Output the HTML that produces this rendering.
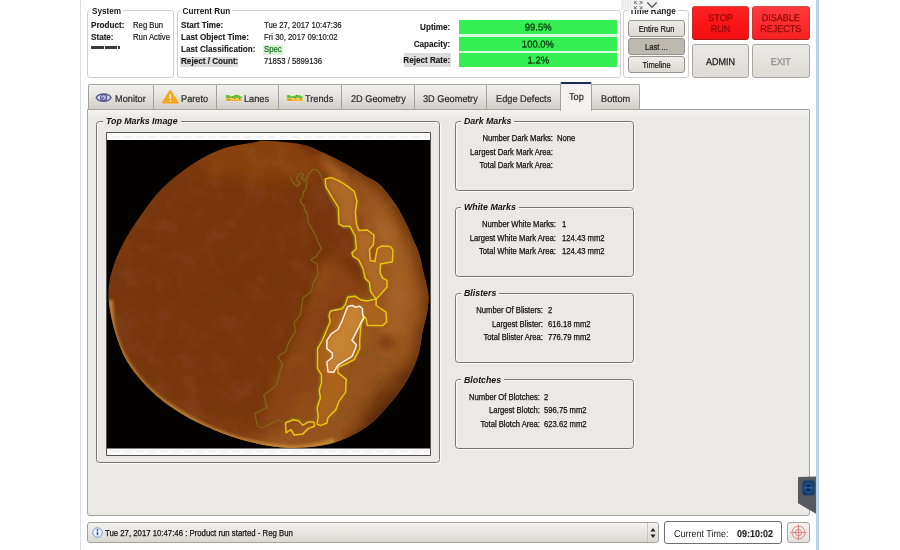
<!DOCTYPE html>
<html>
<head>
<meta charset="utf-8">
<title>Top Marks</title>
<style>
html,body{margin:0;padding:0;}
body{width:900px;height:550px;position:relative;overflow:hidden;background:#fff;font-family:"Liberation Sans",sans-serif;font-size:8px;color:#1a1a1a;}
.abs{position:absolute;}
.t{position:absolute;white-space:nowrap;line-height:10px;height:10px;font-size:7.85px;}
.b{font-weight:bold;font-size:8.15px;-webkit-text-stroke:0.12px #1a1a1a;}
.n{-webkit-text-stroke:0.2px currentColor;font-size:8.7px;transform:translateY(-0.8px) scaleX(0.89);transform-origin:0 50%;}
.box{position:absolute;border:1px solid #cfcfcf;border-radius:3px;background:#fff;box-sizing:border-box;}
.leg{position:absolute;background:#fff;font-weight:bold;font-size:8.2px;line-height:10px;padding:0 2px;white-space:nowrap;}
.tab{position:absolute;top:84px;height:26px;box-sizing:border-box;border:1px solid #a5a29c;border-bottom:none;border-radius:2px 2px 0 0;background:linear-gradient(#f1f0ee,#e4e2de 50%,#cecbc5);font-size:9.8px;line-height:27px;white-space:nowrap;color:#2a2a2a;}
.tab span{-webkit-text-stroke:0.2px #2a2a2a;position:absolute;top:0;transform:matrix(0.94,0.0005,0,1,0,0);transform-origin:0 50%;}
.fs{position:absolute;border:1px solid #787673;border-radius:3.500px;box-sizing:border-box;box-shadow:inset 1px 1px 0 #fbfbfa,1px 1px 0 #fbfbfa;}
.fl{position:absolute;background:#ebe9e6;font-weight:bold;font-style:italic;font-size:8.8px;line-height:10px;padding:0 3px;white-space:nowrap;color:#111;}
.k{position:absolute;white-space:nowrap;line-height:10px;font-size:8.5px;text-align:right;width:120px;color:#111;transform:scaleX(0.9);transform-origin:100% 50%;-webkit-text-stroke:0.25px #111;}
.v{position:absolute;white-space:nowrap;line-height:10px;font-size:8.5px;color:#111;transform:scaleX(0.9);transform-origin:0 50%;-webkit-text-stroke:0.25px #111;}
.btn{position:absolute;box-sizing:border-box;border:1px solid #a9a6a0;border-radius:3px;background:linear-gradient(#f4f3f0,#e4e2dd);text-align:center;white-space:nowrap;}
.sm{font-size:8.3px;line-height:16px;color:#151515;background:linear-gradient(#efede9,#dcd9d3);border-color:#96938d;}
.sm span{-webkit-text-stroke:0.2px #151515;display:inline-block;transform:scaleX(0.91);}
.big{font-size:9.8px;line-height:11px;}
.big span{-webkit-text-stroke:0.25px currentColor;position:absolute;left:0;width:100%;text-align:center;transform:matrix(0.92,0.0005,0,1,0,0);}
.bar{position:absolute;left:459px;width:158px;height:14px;background:#35ef52;text-align:center;font-size:10px;line-height:14px;color:#0e3a12;}
.bar span{-webkit-text-stroke:0.3px #0e3a12;display:inline-block;transform:translateY(0.6px) matrix(0.95,0.0005,0,1,0,0);}
</style>
</head>
<body><div id="root" style="position:absolute;left:0;top:0;width:900px;height:550px;will-change:transform;">
<!-- window left edge + right stripe -->
<div class="abs" style="left:80px;top:0;width:1px;height:550px;background:#dcdfe3;"></div>
<div class="abs" style="left:816px;top:0;width:3px;height:550px;background:#bcd3ea;"></div>

<!-- System box -->
<div class="box" style="left:87px;top:10px;width:87px;height:67.500px;"></div>
<div class="leg" style="left:90px;top:6.500px;">System</div>
<div class="t b" style="left:91px;top:20.700px;">Product:</div>
<div class="t n" style="left:132.500px;top:20.700px;">Reg Bun</div>
<div class="t b" style="left:91px;top:32.800px;">State:</div>
<div class="t n" style="left:132.500px;top:32.800px;">Run Active</div>
<div class="abs" style="left:91px;top:46px;width:13px;height:3px;background:#3a3a3a;"></div>
<div class="abs" style="left:105px;top:46px;width:12px;height:3px;background:#3a3a3a;"></div>
<div class="abs" style="left:118px;top:46px;width:2px;height:3px;background:#3a3a3a;"></div>

<!-- Current Run box -->
<div class="box" style="left:177px;top:10px;width:444px;height:67.500px;"></div>
<div class="leg" style="left:180.500px;top:6.500px;">Current Run</div>
<div class="t b" style="left:181px;top:20.700px;">Start Time:</div>
<div class="t b" style="left:181px;top:32.800px;">Last Object Time:</div>
<div class="t b" style="left:181px;top:44.900px;">Last Classification:</div>
<div class="abs" style="left:180px;top:57px;width:58px;height:10px;background:#dddddd;"></div>
<div class="t b" style="left:181px;top:57.400px;">Reject / Count:</div>
<div class="t n" style="left:264px;top:20.700px;">Tue 27, 2017 10:47:36</div>
<div class="t n" style="left:264px;top:32.800px;">Fri 30, 2017 09:10:02</div>
<div class="abs" style="left:263px;top:45px;width:19.500px;height:10px;background:#d9f2d5;"></div>
<div class="t n" style="left:264px;top:44.900px;color:#1d6b1d;">Spec</div>
<div class="t n" style="left:264px;top:57.400px;">71853 / 5899136</div>

<div class="t b" style="left:350px;top:23.200px;width:100.300px;text-align:right;">Uptime:</div>
<div class="t b" style="left:350px;top:39.700px;width:100.300px;text-align:right;">Capacity:</div>
<div class="abs" style="left:404px;top:53px;width:47px;height:14px;background:#dddddd;"></div>
<div class="t b" style="left:350px;top:56.200px;width:100.300px;text-align:right;">Reject Rate:</div>
<div class="abs" style="left:459px;top:21px;width:158px;height:45px;background:#d6f9dd;"></div>
<div class="bar" style="top:20px;"><span>99.5%</span></div>
<div class="bar" style="top:36.500px;"><span>100.0%</span></div>
<div class="bar" style="top:53px;"><span>1.2%</span></div>

<!-- Time range box -->
<div class="box" style="left:623px;top:10px;width:66px;height:67.500px;"></div>
<div class="leg" style="left:627.500px;top:6.500px;">Time Range</div>
<div class="btn sm" style="left:628px;top:20px;width:57px;height:17px;"><span>Entire Run</span></div>
<div class="btn sm" style="left:628px;top:38px;width:57px;height:17px;background:#bdb8b0;"><span>Last ...</span></div>
<div class="btn sm" style="left:628px;top:56px;width:57px;height:17px;"><span>Timeline</span></div>
<!-- overlay toolbar -->
<div class="abs" style="left:621px;top:0;width:38px;height:10px;background:#f1f1f1;"></div>
<svg class="abs" style="left:621px;top:0;" width="38" height="11" viewBox="0 0 38 11">
<rect x="1" y="0" width="8.500" height="9.500" fill="#e3e3e3"/>
<g stroke="#fafafa" stroke-width="0.800" fill="none"><path d="M3.300 0V9.500M5.800 0V9.500M8.300 0V9.500M1 1.800H9.500M1 4.300H9.500M1 6.800H9.500M1 9.200H9.500"/></g>
<g stroke="#777" stroke-width="1" fill="none"><path d="M15.700 1.800h-2.200v2.200M13.500 1.800l2.600 2.600M18.700 1.800h2.200v2.200M20.900 1.800l-2.600 2.600M15.700 8.600h-2.200v-2.200M13.500 8.600l2.600-2.600M18.700 8.600h2.200v-2.200M20.900 8.600l-2.600-2.600"/></g>
<path d="M26.300 2.400l4.700 4.800l4.700-4.800" stroke="#5c5c5c" stroke-width="1.400" fill="none"/>
</svg>

<!-- big buttons -->
<div class="btn big" style="left:692px;top:6px;width:57px;height:34px;background:linear-gradient(#fd2224,#fb1416 55%,#f21012);border-color:#d84040 #c62a2a #a81818 #c62a2a;color:#8e0b0b;"><span style="top:5px;">STOP</span><span style="top:16.100px;">RUN</span></div>
<div class="btn big" style="left:752px;top:6px;width:57.500px;height:34px;background:linear-gradient(#fe3a3c,#fc2c2e 55%,#f52224);border-color:#de4a4a #cc3434 #b02020 #cc3434;color:#8e0b0b;"><span style="top:5px;">DISABLE</span><span style="top:16.100px;">REJECTS</span></div>
<div class="btn big" style="left:692px;top:44px;width:57px;height:34px;background:linear-gradient(#ebe9e5,#dedbd6);color:#1a1a1a;"><span style="top:10.500px;">ADMIN</span></div>
<div class="btn big" style="left:752px;top:44px;width:57.500px;height:34px;background:linear-gradient(#ebe9e5,#dedbd6);color:#8b8b8b;"><span style="top:10.500px;">EXIT</span></div>

<!-- tabs -->
<div class="tab" style="left:88px;width:66px;"><span style="left:26px;">Monitor</span></div>
<div class="tab" style="left:153px;width:64px;"><span style="left:27.200px;">Pareto</span></div>
<div class="tab" style="left:216px;width:63px;"><span style="left:27.300px;">Lanes</span></div>
<div class="tab" style="left:278px;width:64px;"><span style="left:26.200px;">Trends</span></div>
<div class="tab" style="left:341px;width:74px;"><span style="left:8.500px;">2D Geometry</span></div>
<div class="tab" style="left:414px;width:73px;"><span style="left:7.700px;">3D Geometry</span></div>
<div class="tab" style="left:486px;width:75px;"><span style="left:8.500px;">Edge Defects</span></div>
<div class="tab" style="left:591px;width:48.500px;"><span style="left:9px;">Bottom</span></div>

<!-- tab icons -->
<svg class="abs" style="left:95px;top:92px;" width="18" height="12" viewBox="0 0 18 12">
<path d="M1.300 5.600C3.800 0.700 13.400 0.700 15.900 5.600C13.400 10.500 3.800 10.500 1.300 5.600Z" fill="#ececf6" stroke="#5d5d96" stroke-width="1.600"/>
<circle cx="8.600" cy="5.600" r="3.100" fill="#b9b9e8" stroke="#585892" stroke-width="1.300"/>
<circle cx="8" cy="6.100" r="1.100" fill="#6a6aa6"/>
</svg>
<svg class="abs" style="left:161px;top:89px;" width="19" height="16" viewBox="0 0 19 16">
<path d="M9.300 1.600L17 13.600H1.600Z" fill="#f8a61e" stroke="#f8a61e" stroke-width="1.600" stroke-linejoin="round"/>
<path d="M9.300 5V10" stroke="#fff3c4" stroke-width="1.600"/><circle cx="9.300" cy="12" r="0.900" fill="#fff3c4"/>
</svg>
<svg class="abs" style="left:224.500px;top:93px;" width="18" height="10" viewBox="0 0 18 10">
<defs><filter id="ib224" x="-20%" y="-20%" width="140%" height="140%"><feGaussianBlur stdDeviation="0.450"/></filter></defs>
<g filter="url(#ib224)">
<rect x="0.800" y="1.600" width="16" height="6.400" rx="1" fill="#eef7c8"/>
<path d="M0.800 2.200L3.800 2L5.600 3.600L7.400 3.200L9.400 2.600L10.600 1.400L12 2.800L13.400 1.800L15.200 3.200L16.800 3.600V5.200H0.800Z" fill="#56c24c"/>
<path d="M0.800 4.600L4 5.200L6.500 4.400L8.400 5L10.400 4.200L12.200 5L14.200 4.400L16.800 5.400V7.400H0.800Z" fill="#f7d848"/>
<path d="M0.800 6.600H16.800V8H0.800Z" fill="#f3b040"/>
<circle cx="7.200" cy="4.200" r="0.800" fill="#7f6a1c"/><circle cx="9.800" cy="5.200" r="0.800" fill="#8a6a1a"/><circle cx="11.200" cy="2.600" r="0.700" fill="#4a7a2a"/><circle cx="14.600" cy="5.600" r="0.800" fill="#8a6a1a"/>
<path d="M1.500 6L5.500 6.600" stroke="#8a7a20" stroke-width="0.800"/>
</g>
</svg>
<svg class="abs" style="left:286px;top:93px;" width="18" height="10" viewBox="0 0 18 10">
<defs><filter id="ib286" x="-20%" y="-20%" width="140%" height="140%"><feGaussianBlur stdDeviation="0.450"/></filter></defs>
<g filter="url(#ib286)">
<rect x="0.800" y="1.600" width="16" height="6.400" rx="1" fill="#eef7c8"/>
<path d="M0.800 2.200L3.800 2L5.600 3.600L7.400 3.200L9.400 2.600L10.600 1.400L12 2.800L13.400 1.800L15.200 3.200L16.800 3.600V5.200H0.800Z" fill="#56c24c"/>
<path d="M0.800 4.600L4 5.200L6.500 4.400L8.400 5L10.400 4.200L12.200 5L14.200 4.400L16.800 5.400V7.400H0.800Z" fill="#f7d848"/>
<path d="M0.800 6.600H16.800V8H0.800Z" fill="#f3b040"/>
<circle cx="7.200" cy="4.200" r="0.800" fill="#7f6a1c"/><circle cx="9.800" cy="5.200" r="0.800" fill="#8a6a1a"/><circle cx="11.200" cy="2.600" r="0.700" fill="#4a7a2a"/><circle cx="14.600" cy="5.600" r="0.800" fill="#8a6a1a"/>
<path d="M1.500 6L5.500 6.600" stroke="#8a7a20" stroke-width="0.800"/>
</g>
</svg>
<!-- content panel -->
<div class="abs" style="left:87px;top:109px;width:723px;height:407px;box-sizing:border-box;border:1px solid #a5a29c;border-radius:0 0 3px 3px;background:linear-gradient(#f4f3f1,#ebe9e6 9px,#ebe9e6);"></div>
<div class="tab" style="left:560px;top:82px;width:32px;height:29px;background:#f3f2f0;border-top:2px solid #1b2a5a;line-height:26px;"><span style="left:8px;">Top</span></div>

<!-- Top marks fieldset -->
<div class="fs" style="left:96px;top:121px;width:344px;height:342px;"></div>
<div class="fl" style="left:103px;top:116.2px;">Top Marks Image</div>

<svg class="abs" style="left:106px;top:132px;" width="325" height="324" viewBox="106 132 325 324">
<defs>
<clipPath id="bc"><path d="M265.0 140.8C272.9 141.1 292.0 142.4 301.8 144.4C311.6 146.4 316.4 149.8 323.7 153.1C331.0 156.4 338.2 160.0 345.5 164.0C352.8 168.0 361.7 173.8 367.3 177.1C372.9 180.4 375.2 180.7 379.0 184.0C382.8 187.3 386.7 192.5 390.0 196.8C393.3 201.1 396.0 204.8 399.0 209.9C402.0 215.0 405.8 222.6 408.0 227.3C410.2 232.0 410.7 233.9 412.5 238.3C414.3 242.7 417.2 247.8 419.0 253.5C420.8 259.2 421.9 265.9 423.5 272.8C425.1 279.7 427.7 288.1 428.3 294.6C428.9 301.2 428.0 305.9 427.0 312.1C426.0 318.3 424.1 324.1 422.5 331.7C420.9 339.3 420.5 348.7 417.5 357.5C414.5 366.3 409.6 376.2 404.5 384.5C399.4 392.8 392.9 400.2 387.0 407.0C381.1 413.8 375.8 419.8 369.0 425.0C362.2 430.2 354.0 434.7 346.5 438.0C339.0 441.3 331.4 443.4 324.0 445.0C316.6 446.6 309.1 447.2 301.8 447.6C294.5 448.0 287.9 448.1 280.0 447.3C272.1 446.5 264.0 445.3 254.6 443.0C245.2 440.7 234.9 438.1 223.6 433.7C212.3 429.3 197.9 423.1 186.6 416.7C175.3 410.3 164.9 403.3 155.6 395.1C146.3 386.9 137.1 376.1 130.9 367.3C124.7 358.6 121.8 351.4 118.5 342.6C115.2 333.8 112.5 323.5 110.8 314.7C109.1 305.9 108.1 298.1 108.6 290.0C109.0 281.9 110.9 274.1 113.5 266.0C116.1 257.9 119.9 249.5 124.3 241.3C128.7 233.1 133.8 225.4 140.0 216.6C146.2 207.8 153.0 197.5 161.8 188.7C170.6 179.9 182.4 170.7 192.7 164.0C203.0 157.3 213.3 152.1 223.6 148.5C233.9 144.9 247.7 143.7 254.6 142.4C261.5 141.1 257.1 140.5 265.0 140.8Z"/></clipPath>
<filter id="bl8" x="-30%" y="-30%" width="160%" height="160%"><feGaussianBlur stdDeviation="8"/></filter>
<filter id="bl4" x="-30%" y="-30%" width="160%" height="160%"><feGaussianBlur stdDeviation="4"/></filter>
<filter id="bl2" x="-30%" y="-30%" width="160%" height="160%"><feGaussianBlur stdDeviation="2"/></filter>
<filter id="bl1b" x="-10%" y="-10%" width="120%" height="120%"><feGaussianBlur stdDeviation="1.4"/></filter>
<filter id="bl1" x="-10%" y="-10%" width="120%" height="120%"><feGaussianBlur stdDeviation="0.6"/></filter>
<radialGradient id="bg" cx="0.42" cy="0.45" r="0.62"><stop offset="0" stop-color="#74330d"/><stop offset="0.7" stop-color="#783710"/><stop offset="1" stop-color="#8a4414"/></radialGradient>
<filter id="tex" x="0" y="0" width="100%" height="100%"><feTurbulence type="fractalNoise" baseFrequency="0.045" numOctaves="3" seed="7" result="n"/><feColorMatrix in="n" type="matrix" values="0 0 0 0 0.75  0 0 0 0 0.42  0 0 0 0 0.12  1.4 0 0 0 -0.6"/></filter>
</defs>
<rect x="107" y="133" width="323" height="322.500" fill="#fbfbfb"/>
<rect x="107" y="140" width="323" height="308.500" fill="#040201"/>
<path d="M112 137H428M112 451.500H428" stroke="#f0f0f0" stroke-width="2" stroke-dasharray="7 5" fill="none"/>
<g filter="url(#bl1)"><path d="M265.0 140.8C272.9 141.1 292.0 142.4 301.8 144.4C311.6 146.4 316.4 149.8 323.7 153.1C331.0 156.4 338.2 160.0 345.5 164.0C352.8 168.0 361.7 173.8 367.3 177.1C372.9 180.4 375.2 180.7 379.0 184.0C382.8 187.3 386.7 192.5 390.0 196.8C393.3 201.1 396.0 204.8 399.0 209.9C402.0 215.0 405.8 222.6 408.0 227.3C410.2 232.0 410.7 233.9 412.5 238.3C414.3 242.7 417.2 247.8 419.0 253.5C420.8 259.2 421.9 265.9 423.5 272.8C425.1 279.7 427.7 288.1 428.3 294.6C428.9 301.2 428.0 305.9 427.0 312.1C426.0 318.3 424.1 324.1 422.5 331.7C420.9 339.3 420.5 348.7 417.5 357.5C414.5 366.3 409.6 376.2 404.5 384.5C399.4 392.8 392.9 400.2 387.0 407.0C381.1 413.8 375.8 419.8 369.0 425.0C362.2 430.2 354.0 434.7 346.5 438.0C339.0 441.3 331.4 443.4 324.0 445.0C316.6 446.6 309.1 447.2 301.8 447.6C294.5 448.0 287.9 448.1 280.0 447.3C272.1 446.5 264.0 445.3 254.6 443.0C245.2 440.7 234.9 438.1 223.6 433.7C212.3 429.3 197.9 423.1 186.6 416.7C175.3 410.3 164.9 403.3 155.6 395.1C146.3 386.9 137.1 376.1 130.9 367.3C124.7 358.6 121.8 351.4 118.5 342.6C115.2 333.8 112.5 323.5 110.8 314.7C109.1 305.9 108.1 298.1 108.6 290.0C109.0 281.9 110.9 274.1 113.5 266.0C116.1 257.9 119.9 249.5 124.3 241.3C128.7 233.1 133.8 225.4 140.0 216.6C146.2 207.8 153.0 197.5 161.8 188.7C170.6 179.9 182.4 170.7 192.7 164.0C203.0 157.3 213.3 152.1 223.6 148.5C233.9 144.9 247.7 143.7 254.6 142.4C261.5 141.1 257.1 140.5 265.0 140.8Z" fill="url(#bg)"/>
<g clip-path="url(#bc)">
<ellipse cx="275" cy="150" rx="90" ry="30" fill="#95480f" opacity="0.55" filter="url(#bl8)"/>
<path d="M330.0 140.0C317.3 144.7 342.1 165.0 345.0 175.0C347.9 185.0 348.9 204.3 352.0 215.0C355.1 225.7 365.3 245.7 368.0 255.0C370.7 264.3 374.1 279.0 372.0 285.0C369.9 291.0 356.5 294.0 352.0 300.0C347.5 306.0 342.3 320.7 338.0 330.0C333.7 339.3 325.1 359.3 320.0 370.0C314.9 380.7 306.7 401.7 300.0 410.0C293.3 418.3 276.0 426.0 270.0 432.0C264.0 438.0 232.3 451.9 255.0 455.0C277.7 458.1 415.3 497.0 440.0 455.0C464.7 413.0 454.7 182.0 440.0 140.0C425.3 98.0 342.7 135.3 330.0 140.0Z" fill="#94521b" filter="url(#bl8)"/>
<path d="M372.0 200.0C374.8 198.3 389.5 219.7 395.0 230.0C400.5 240.3 402.5 250.3 405.0 262.0C407.5 273.7 410.8 287.8 410.0 300.0C409.2 312.2 403.0 326.7 400.0 335.0C397.0 343.3 395.3 350.8 392.0 350.0C388.7 349.2 380.3 338.3 380.0 330.0C379.7 321.7 388.7 310.0 390.0 300.0C391.3 290.0 390.0 280.0 388.0 270.0C386.0 260.0 380.7 251.7 378.0 240.0C375.3 228.3 369.2 201.7 372.0 200.0Z" fill="#aa692b" opacity="0.75" filter="url(#bl8)"/>
<path d="M316 150L326 168L338 186L352 196L345 176L330 152Z" fill="#b56d2c" opacity="0.8" filter="url(#bl4)"/>
<path d="M109.0 300.0C109.5 305.0 109.5 320.0 112.0 330.0C114.5 340.0 117.7 349.5 124.0 360.0C130.3 370.5 139.7 383.3 150.0 393.0C160.3 402.7 173.7 410.8 186.0 418.0C198.3 425.2 211.3 431.3 224.0 436.0C236.7 440.7 249.3 443.8 262.0 446.0C274.7 448.2 287.8 449.7 300.0 449.0C312.2 448.3 329.2 443.2 335.0 442.0" fill="none" stroke="#c48a38" stroke-width="8" opacity="0.85" filter="url(#bl1b)"/>
<path d="M345.0 300.0C340.0 303.7 334.2 304.5 330.0 312.0C325.8 319.5 322.3 332.8 320.0 345.0C317.7 357.2 316.8 372.5 316.0 385.0C315.2 397.5 321.0 413.3 315.0 420.0C309.0 426.7 288.8 425.0 280.0 425.0C271.2 425.0 262.8 426.7 262.0 420.0C261.2 413.3 269.5 399.2 275.0 385.0C280.5 370.8 288.8 350.5 295.0 335.0C301.2 319.5 307.8 304.2 312.0 292.0C316.2 279.8 315.3 267.0 320.0 262.0C324.7 257.0 333.3 257.3 340.0 262.0C346.7 266.7 359.2 283.7 360.0 290.0C360.8 296.3 350.0 296.3 345.0 300.0Z" fill="#8f4a16" opacity="0.7" filter="url(#bl4)"/>
<ellipse cx="408" cy="415" rx="55" ry="40" fill="#4e1f06" opacity="0.55" filter="url(#bl8)" transform="rotate(-48 408 415)"/>
<ellipse cx="386" cy="342" rx="9" ry="6" fill="#6a2e0c" opacity="0.7" filter="url(#bl4)"/>
<path d="M300.0 141.0C303.9 143.0 316.1 149.3 323.7 153.1C331.3 156.9 338.2 160.0 345.5 164.0C352.8 168.0 361.7 173.8 367.3 177.1C372.9 180.4 375.2 180.7 379.0 184.0C382.8 187.3 386.7 192.5 390.0 196.8C393.3 201.1 396.0 204.8 399.0 209.9C402.0 215.0 405.8 222.6 408.0 227.3C410.2 232.0 410.7 233.9 412.5 238.3C414.3 242.7 417.2 247.8 419.0 253.5C420.8 259.2 421.9 265.9 423.5 272.8C425.1 279.7 427.7 288.1 428.3 294.6C428.9 301.2 428.0 305.9 427.0 312.1C426.0 318.3 424.1 324.1 422.5 331.7C420.9 339.3 420.5 348.7 417.5 357.5C414.5 366.3 409.6 376.2 404.5 384.5C399.4 392.8 392.9 400.2 387.0 407.0C381.1 413.8 375.8 419.8 369.0 425.0C362.2 430.2 350.2 435.8 346.5 438.0" fill="none" stroke="#4a1e06" stroke-width="9" opacity="0.55" filter="url(#bl4)"/>
<rect x="107" y="140" width="323" height="308" filter="url(#tex)" opacity="0.14"/>
<path d="M325.2 178.9L331.3 177.6L337.9 180.4L345.5 184.8L354.2 191.3L356.9 201.1L355.3 212.1L356.4 224.1L359.0 230.6L367.3 230.0L373.9 235.0L373.4 244.8L369.5 249.2L370.2 260.7L375.0 261.4L377.2 248.7L381.5 246.1L390.3 246.6L392.9 249.8L392.4 261.8L380.4 264.0L380.0 272.8L382.6 278.2L387.0 280.4L387.0 286.9L380.4 294.6L376.1 299.0L370.6 291.3L369.5 282.6L365.2 278.2L363.0 268.4L358.6 259.7L353.1 256.4L352.0 253.1L356.4 248.7L355.3 236.1L349.9 226.2L343.3 226.2L339.0 224.1L338.5 207.7L332.4 197.9L325.9 186.9Z" fill="#b46e2c" opacity="0.85" filter="url(#bl2)"/>
<path d="M376.1 299.0L376.1 305.5L385.9 312.1L386.6 321.9L382.6 325.6L367.3 325.6L366.2 318.6L363.5 316.0L361.0 324.0L359.7 340.0L359.7 348.7L354.2 359.7L345.5 364.0L337.9 367.3L337.9 372.8L346.2 379.3L345.5 392.4L339.0 401.1L335.7 409.9L328.0 417.5L326.9 423.0L320.4 425.6L317.1 424.1L318.2 416.4L317.1 407.7L320.4 397.9L319.3 390.2L321.5 382.6L321.5 374.9L317.6 368.4L317.6 348.7L322.6 340.0L326.9 329.5L330.2 321.9L329.1 315.3L330.7 311.0L342.2 308.8L345.5 304.4L347.7 297.2L355.3 296.3L360.8 300.0L367.3 301.1Z" fill="#ad651f" opacity="0.9" filter="url(#bl2)"/>
<path d="M347.7 306.6L352.0 305.5L355.3 307.2L359.7 306.2L362.5 308.8L362.5 314.2L364.1 317.5L360.8 323.0L355.3 333.9L352.0 340.4L356.4 344.8L355.3 348.7L352.0 356.4L337.9 365.1L333.5 372.3L328.0 371.7L326.9 361.8L332.4 357.5L332.4 353.1L326.9 348.7L326.9 340.4L331.3 333.9L337.9 329.5L342.2 320.8L345.5 312.1Z" fill="#c98434" opacity="0.95" filter="url(#bl2)"/>
</g></g>
<path d="M106.5 132.5V455.5H430.500V132.5Z" fill="none" stroke="#55524e" stroke-width="1"/>
<g fill="none" stroke-linejoin="round" stroke-linecap="round">
<path d="M290.4 177.4L292.0 181.0L294.2 183.4L297.4 186.2L300.2 183.4L298.0 181.0L296.4 179.1L298.0 175.3L301.3 173.1L303.4 174.7L301.8 178.0L304.5 180.7L306.7 178.5L308.4 174.2L312.7 169.3L317.1 169.8L319.8 173.1L322.0 178.5L324.7 185.1L327.0 191.0L331.0 200.0L337.0 210.0L338.0 222.0L343.0 228.0L350.0 228.0L354.0 236.0L355.0 247.0L351.0 253.0L357.0 260.0L362.0 268.0L364.0 278.0L368.0 283.0L369.0 291.0L374.0 298.0L366.0 300.0L360.0 299.0L355.0 295.0L347.0 296.0L344.0 304.0L341.0 308.0L330.0 310.0L328.0 315.0L329.0 322.0L325.0 330.0L319.0 344.0L316.0 349.0L316.0 368.0L320.0 375.0L320.0 382.0L318.0 390.0L319.0 398.0L316.0 408.0L317.0 416.0L312.0 420.0L305.0 422.0L300.0 419.0L292.0 418.0L284.0 422.0L278.0 420.0L270.0 424.0L262.0 428.0L257.7 426.0L254.6 413.6L266.9 407.5L263.8 395.1L276.2 385.8L282.4 364.2L277.7 356.5L285.5 351.8L288.7 342.6L295.3 331.7L294.2 323.0L300.7 314.2L302.9 297.9L311.7 291.3L312.8 283.7L318.2 274.9L317.1 264.0L310.6 259.7L316.0 256.4L321.5 248.7L319.3 244.8L314.9 233.9L308.4 223.0L307.3 213.4L304.5 210.2L304.0 205.8L301.3 203.6L300.2 199.8L302.9 197.1L302.9 192.7L306.2 188.4L306.7 181.3" stroke="#7d6a1a" stroke-width="1.300" opacity="0.9"/>
<path d="M361.9 353.1L371.7 353.1L376.1 358.6L389.2 359.7L394.0 364.0L392.0 372.0L384.0 380.0L378.0 392.0L366.0 402.0L356.0 412.0L346.0 418.0L336.8 416.4L345.5 403.3L349.9 390.2L349.9 369.5L355.3 361.8Z" stroke="#6e5a16" stroke-width="1" opacity="0.6"/>
<path d="M325.2 178.9L331.3 177.6L337.9 180.4L345.5 184.8L354.2 191.3L356.9 201.1L355.3 212.1L356.4 224.1L359.0 230.6L367.3 230.0L373.9 235.0L373.4 244.8L369.5 249.2L370.2 260.7L375.0 261.4L377.2 248.7L381.5 246.1L390.3 246.6L392.9 249.8L392.4 261.8L380.4 264.0L380.0 272.8L382.6 278.2L387.0 280.4L387.0 286.9L380.4 294.6L376.1 299.0L370.6 291.3L369.5 282.6L365.2 278.2L363.0 268.4L358.6 259.7L353.1 256.4L352.0 253.1L356.4 248.7L355.3 236.1L349.9 226.2L343.3 226.2L339.0 224.1L338.5 207.7L332.4 197.9L325.9 186.9Z" stroke="#e8c60e" stroke-width="1.500"/>
<path d="M376.1 299.0L376.1 305.5L385.9 312.1L386.6 321.9L382.6 325.6L367.3 325.6L366.2 318.6L363.5 316.0L361.0 324.0L359.7 340.0L359.7 348.7L354.2 359.7L345.5 364.0L337.9 367.3L337.9 372.8L346.2 379.3L345.5 392.4L339.0 401.1L335.7 409.9L328.0 417.5L326.9 423.0L320.4 425.6L317.1 424.1L318.2 416.4L317.1 407.7L320.4 397.9L319.3 390.2L321.5 382.6L321.5 374.9L317.6 368.4L317.6 348.7L322.6 340.0L326.9 329.5L330.2 321.9L329.1 315.3L330.7 311.0L342.2 308.8L345.5 304.4L347.7 297.2L355.3 296.3L360.8 300.0L367.3 301.1Z" stroke="#e8c60e" stroke-width="1.500"/>
<path d="M285.5 423.0L293.1 419.7L298.6 420.8L302.9 425.2L308.4 421.9L313.8 421.9L314.5 426.2L308.4 428.4L302.9 433.9L294.2 435.0L290.9 429.5L286.1 432.8Z" stroke="#e8c60e" stroke-width="1.500"/>
<path d="M347.7 306.6L352.0 305.5L355.3 307.2L359.7 306.2L362.5 308.8L362.5 314.2L364.1 317.5L360.8 323.0L355.3 333.9L352.0 340.4L356.4 344.8L355.3 348.7L352.0 356.4L337.9 365.1L333.5 372.3L328.0 371.7L326.9 361.8L332.4 357.5L332.4 353.1L326.9 348.7L326.9 340.4L331.3 333.9L337.9 329.5L342.2 320.8L345.5 312.1Z" stroke="#fff2e2" stroke-width="1.500"/>
</g>
</svg>

<!-- right fieldsets -->
<div class="fs" style="left:455px;top:121px;width:179px;height:70px;"></div>
<div class="fl" style="left:461px;top:116.2px;">Dark Marks</div>
<div class="k" style="left:432.8px;top:133.2px;">Number Dark Marks:</div><div class="v" style="left:557px;top:133.2px;">None</div>
<div class="k" style="left:432.8px;top:146.7px;">Largest Dark Mark Area:</div>
<div class="k" style="left:432.8px;top:160.2px;">Total Dark Mark Area:</div>

<div class="fs" style="left:455px;top:207px;width:179px;height:70px;"></div>
<div class="fl" style="left:461px;top:202.2px;">White Marks</div>
<div class="k" style="left:436.3px;top:219.2px;">Number White Marks:</div><div class="v" style="left:561.500px;top:219.2px;">1</div>
<div class="k" style="left:436.3px;top:232.7px;">Largest White Mark Area:</div><div class="v" style="left:561.500px;top:232.7px;">124.43 mm2</div>
<div class="k" style="left:436.3px;top:246.2px;">Total White Mark Area:</div><div class="v" style="left:561.500px;top:246.2px;">124.43 mm2</div>

<div class="fs" style="left:455px;top:293px;width:179px;height:70px;"></div>
<div class="fl" style="left:461px;top:288.2px;">Blisters</div>
<div class="k" style="left:422.8px;top:305.2px;">Number Of Blisters:</div><div class="v" style="left:547.500px;top:305.2px;">2</div>
<div class="k" style="left:422.8px;top:318.7px;">Largest Blister:</div><div class="v" style="left:547.500px;top:318.7px;">616.18 mm2</div>
<div class="k" style="left:422.8px;top:332.2px;">Total Blister Area:</div><div class="v" style="left:547.500px;top:332.2px;">776.79 mm2</div>

<div class="fs" style="left:455px;top:379px;width:179px;height:70px;"></div>
<div class="fl" style="left:461px;top:374.7px;">Blotches</div>
<div class="k" style="left:419.8px;top:391.7px;">Number Of Blotches:</div><div class="v" style="left:544px;top:391.7px;">2</div>
<div class="k" style="left:419.8px;top:405.2px;">Largest Blotch:</div><div class="v" style="left:544px;top:405.2px;">596.75 mm2</div>
<div class="k" style="left:419.8px;top:418.7px;">Total Blotch Area:</div><div class="v" style="left:544px;top:418.7px;">623.62 mm2</div>

<!-- teamviewer-ish widget -->
<svg class="abs" style="left:796px;top:476px;" width="21" height="40" viewBox="0 0 21 40">
<path d="M2.600 1L20 0.500V37.700L2 27.200V1.600Z" fill="#56595d"/>
<rect x="6.400" y="4.300" width="12.200" height="15.200" rx="2.500" fill="#17406f"/>
<circle cx="12.500" cy="11.800" r="4.200" fill="#0f2c50" stroke="#2c68a8" stroke-width="1"/>
<path d="M10 11.800h5M10.800 10.600l-1.300 1.200l1.300 1.200M14.200 10.600l1.300 1.200l-1.300 1.200" stroke="#3f86cf" stroke-width="0.800" fill="none"/>
</svg>

<!-- status bar -->
<div class="abs" style="left:87px;top:522px;width:572px;height:21px;box-sizing:border-box;border:1px solid #a5a29c;border-radius:3px;background:linear-gradient(#f3f2ef,#dbd8d2);"></div>
<div class="abs" style="left:647px;top:523px;width:1px;height:19px;background:#c9c6c0;"></div>
<svg class="abs" style="left:649px;top:527px;" width="8" height="12" viewBox="0 0 8 12"><path d="M4 1L6.500 4.500H1.500ZM4 11L6.500 7.500H1.500Z" fill="#222"/></svg>
<svg class="abs" style="left:92px;top:527px;" width="11" height="11" viewBox="0 0 11 11"><circle cx="5.500" cy="5.500" r="4.700" fill="#e9f1fb" stroke="#6a8fc0" stroke-width="0.900"/><path d="M5.500 4.700V8.200" stroke="#2a58a8" stroke-width="1.500"/><circle cx="5.500" cy="3" r="0.900" fill="#2a58a8"/></svg>
<div class="t" style="left:105px;top:528px;font-size:8.6px;transform:scaleX(0.905);transform-origin:0 50%;-webkit-text-stroke:0.25px #111;">Tue 27, 2017 10:47:46 : Product run started - Reg Bun</div>
<div class="abs" style="left:664px;top:521px;width:118px;height:23px;box-sizing:border-box;border:1px solid #6f6f6f;border-radius:3px;background:#fff;"></div>
<div class="t" style="left:673.500px;top:528.600px;font-size:10px;transform:matrix(0.9,0.0005,0,1,0,0);transform-origin:0 50%;">Current Time:</div>
<div class="t b" style="left:736.500px;top:528.600px;font-size:10px;transform:matrix(0.9,0.0005,0,1,0,0);transform-origin:0 50%;">09:10:02</div>
<div class="btn" style="left:787px;top:522px;width:23px;height:21px;"></div>
<svg class="abs" style="left:790px;top:524px;" width="17" height="17" viewBox="0 0 17 17"><g fill="none" stroke="#d97272" stroke-width="0.800"><circle cx="8.500" cy="8.500" r="6.500"/><circle cx="8.500" cy="8.500" r="3.200"/><path d="M8.500 0.500V16.500M0.500 8.500H16.500"/></g></svg>
</div></body>
</html>
